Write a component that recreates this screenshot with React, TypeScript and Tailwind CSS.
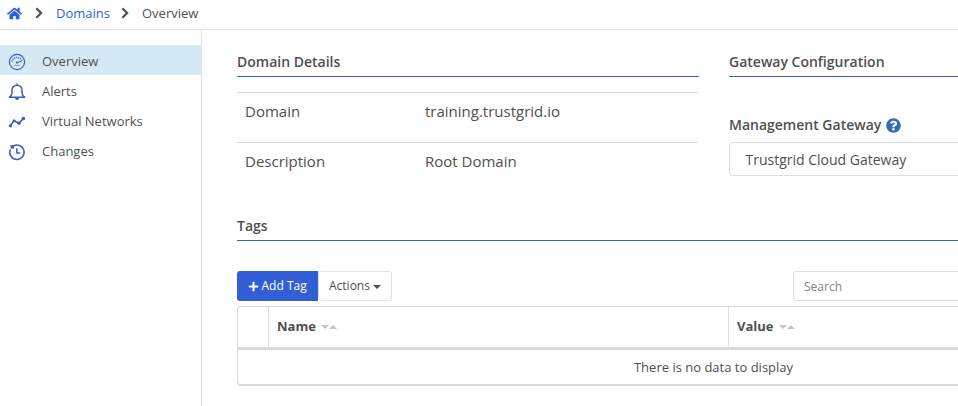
import type { ReactNode } from "react";
import { FaHome, FaPlus, FaQuestionCircle } from "react-icons/fa";

const stroke = {
  fill: "none",
  stroke: "currentColor",
  strokeLinecap: "round" as const,
  strokeLinejoin: "round" as const,
};

function GaugeIcon() {
  return (
    <svg width="18" height="18" viewBox="0 0 18 18" {...stroke}>
      <circle cx="9" cy="9" r="7.6" strokeWidth="1.2" />
      <path d="M4 8.6a5.1 5.1 0 0 1 10 0" strokeWidth="1.5" strokeDasharray="1.1 0.9" strokeLinecap="butt" />
      <path d="M8.600 9.700l4-1.300" strokeWidth="1.100" />
      <path d="M6.500 12.400h5" strokeWidth="0.600" />
      <circle cx="8.800" cy="9.600" r="1" fill="currentColor" stroke="none" />
    </svg>
  );
}

function BellIcon() {
  return (
    <svg width="18" height="18" viewBox="0 0 18 18" {...stroke}>
      <path d="M9 1v1.200M4 10.200V7a5 4.800 0 0 1 10 0v3.200c0 1.700.8 2.600 2.700 4H1.300c1.900-1.400 2.700-2.300 2.700-4z" strokeWidth="1.500" />
      <path d="M7 15h4a2 2 0 0 1-4 0z" fill="currentColor" stroke="none" />
    </svg>
  );
}

function NetworkIcon() {
  return (
    <svg width="18" height="18" viewBox="0 0 18 18" {...stroke}>
      <path d="M2.400 12.800L6 7.700l5 2.500 4.500-4.800" strokeWidth="1.600" />
      <g fill="currentColor" stroke="none">
        <circle cx="2.500" cy="12.700" r="1.700" />
        <circle cx="6" cy="7.700" r="1.500" />
        <circle cx="11" cy="10.300" r="1.700" />
        <circle cx="15.400" cy="5.500" r="1.800" />
      </g>
    </svg>
  );
}

function HistoryIcon() {
  return (
    <svg width="18" height="18" viewBox="0 0 18 18" {...stroke}>
      <path d="M4.300 3.700a7.200 7.200 0 1 1-2.200 3.200" strokeWidth="1.500" />
      <path d="M8.800 5.200v4.700h3.400" strokeWidth="1.500" strokeLinecap="butt" strokeLinejoin="miter" />
      <path d="M2.400 2.300l3.400-.4.300 3.700-3.300.2z" fill="currentColor" stroke="none" />
    </svg>
  );
}

function Separator() {
  return (
    <svg width="8" height="12" viewBox="0 0 8 12" className="mr-[13px]" fill="none" stroke="currentColor" strokeWidth="2.200">
      <path d="M1.300 1.200L6.100 6l-4.800 4.800" />
    </svg>
  );
}

const navItems = [
  { label: "Overview", icon: <GaugeIcon />, active: true },
  { label: "Alerts", icon: <BellIcon />, active: false },
  { label: "Virtual Networks", icon: <NetworkIcon />, active: false },
  { label: "Changes", icon: <HistoryIcon />, active: false },
];

function SectionTitle({ children }: { children: ReactNode }) {
  return (
    <h2 className="h-[31px] border-b border-[#3660c6] text-sm leading-8 font-semibold">
      {children}
    </h2>
  );
}

function DetailRow({ label, value }: { label: string; value: string }) {
  return (
    <div className="flex h-[50px] border-t border-[#d8d8d8] pl-2 text-[15px] leading-9">
      <dt className="w-[180px]">{label}</dt>
      <dd>{value}</dd>
    </div>
  );
}

function SortMarks() {
  return (
    <svg width="16" height="4" viewBox="0 0 16 4" fill="#c4c4c4">
      <path d="M0 0h8L4 4zM8 4h8l-4-4z" />
    </svg>
  );
}

export default function App() {
  return (
    <div className="flex h-[406px] w-[958px] flex-col overflow-hidden bg-white font-['Open_Sans',sans-serif] whitespace-nowrap text-[#505050]">
      <nav className="flex h-[30px] shrink-0 items-center border-b border-[#e2e2e2] pb-[3px] pl-[7px] text-[13px]">
        <FaHome className="mr-[13px] size-[15px] text-[#335fd6]" />
        <Separator />
        <a className="mt-px mr-[10px] w-[55px] text-[#335fd6]">Domains</a>
        <Separator />
        <span className="mt-px">Overview</span>
      </nav>
      <div className="flex min-h-0 flex-1">
        <aside className="w-[202px] shrink-0 border-r border-[#e2e2e2] pt-[15px]">
          {navItems.map((item) => (
            <a
              key={item.label}
              className={`flex h-[30px] items-center pl-2 text-[13px] ${item.active ? "bg-[#d5eaf5]" : ""}`}
            >
              <span className="mt-[3px] mr-4 text-[#3d61b8]">{item.icon}</span>
              <span className="mt-[3px]">{item.label}</span>
            </a>
          ))}
        </aside>
        <main className="w-[1025px] shrink-0 pt-4 pl-[35px]">
          <div className="flex h-[164px] gap-[30px]">
            <section className="w-[462px]">
              <SectionTitle>Domain Details</SectionTitle>
              <dl className="mt-[15px] mr-px">
                <DetailRow label="Domain" value="training.trustgrid.io" />
                <DetailRow label="Description" value="Root Domain" />
              </dl>
            </section>
            <section className="flex-1">
              <SectionTitle>Gateway Configuration</SectionTitle>
              <div className="mt-[38px] flex h-5 items-center gap-[5px] text-sm font-semibold">
                <span>Management Gateway</span>
                <FaQuestionCircle className="size-[15px] text-[#336db3]" />
              </div>
              <div className="mt-[7px] h-[34px] rounded border border-[#dedede] pl-[15.500px] text-sm leading-[34px]">
                Trustgrid Cloud Gateway
              </div>
            </section>
          </div>
          <section>
            <SectionTitle>Tags</SectionTitle>
            <div className="mt-[30px] flex h-[30px] text-xs">
              <button className="flex w-[81px] items-center gap-[3px] rounded-l-[3px] bg-[#335fd6] pl-[10.500px] text-white">
                <FaPlus className="mt-px size-[11px]" />
                Add Tag
              </button>
              <button className="flex w-[74px] items-center gap-[3px] rounded-[3px] border border-[#e2e2e2] pl-[10px]">
                Actions
                <svg width="8" height="4" viewBox="0 0 8 4" className="mt-0.5" fill="currentColor">
                  <path d="M0 0h8L4 4z" />
                </svg>
              </button>
              <div className="ml-[401px] flex-1 rounded-[3px] border border-[#dedede] pl-[10px] leading-[30px] text-[#858585]">
                Search
              </div>
            </div>
            <div className="mt-[5px] h-20 rounded border border-b-2 border-[#d8d8d8] text-[13px]">
              <div className="flex h-[43px] border-b-3 border-[#d8d8d8] font-bold">
                <div className="w-[31px] border-r border-[#dedede]" />
                <div className="flex w-[460px] items-center gap-[5px] border-r border-[#dedede] pl-2">
                  Name <SortMarks />
                </div>
                <div className="flex items-center gap-[5px] pl-2">
                  Value <SortMarks />
                </div>
              </div>
              <div className="h-[34px] w-[951px] text-center leading-[35px]">There is no data to display</div>
            </div>
          </section>
        </main>
      </div>
    </div>
  );
}
